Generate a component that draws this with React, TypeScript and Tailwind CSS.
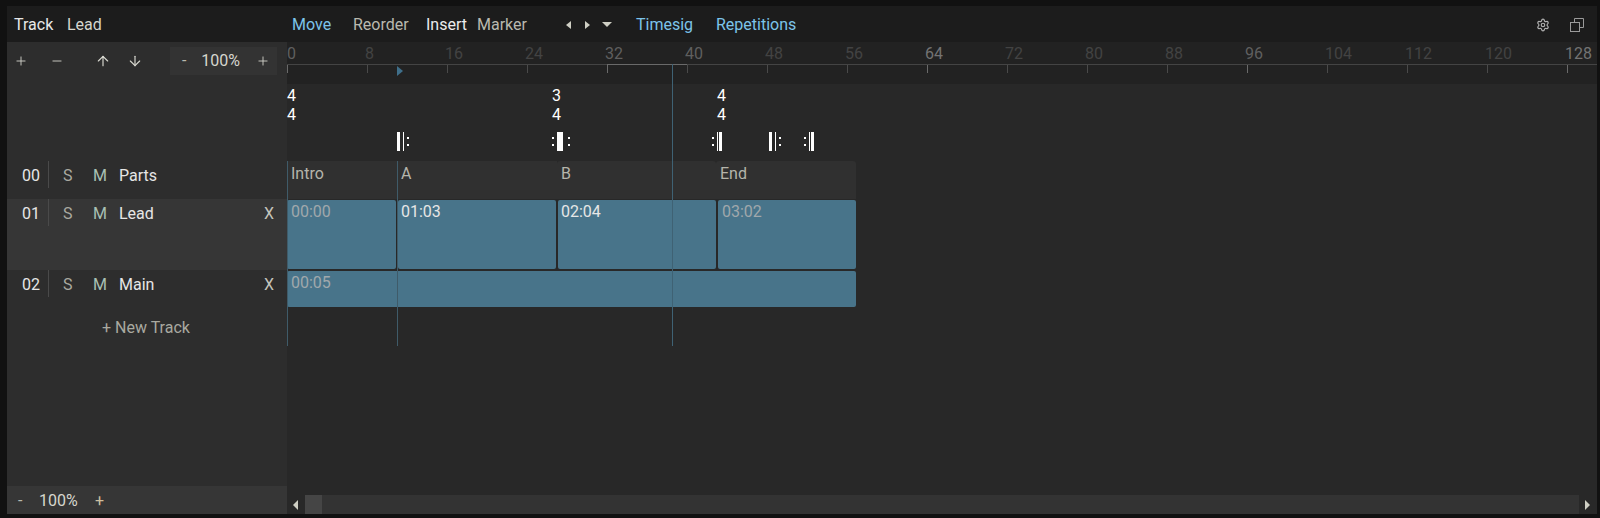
import React from 'react';
import { ArrowDown, ArrowUp, Minus, Plus, Settings } from 'lucide-react';

const ticks = [
  { label: '0', text: 'text-[#5f5f5f]', tick: 'bg-[#6a6a6a]' },
  { label: '8', text: 'text-[#434343]', tick: 'bg-[#4a4a4a]' },
  { label: '16', text: 'text-[#434343]', tick: 'bg-[#4a4a4a]' },
  { label: '24', text: 'text-[#434343]', tick: 'bg-[#4a4a4a]' },
  { label: '32', text: 'text-[#5f5f5f]', tick: 'bg-[#6a6a6a]' },
  { label: '40', text: 'text-[#5f5f5f]', tick: 'bg-[#4a4a4a]' },
  { label: '48', text: 'text-[#434343]', tick: 'bg-[#4a4a4a]' },
  { label: '56', text: 'text-[#434343]', tick: 'bg-[#4a4a4a]' },
  { label: '64', text: 'text-[#737373]', tick: 'bg-[#6a6a6a]' },
  { label: '72', text: 'text-[#434343]', tick: 'bg-[#4a4a4a]' },
  { label: '80', text: 'text-[#434343]', tick: 'bg-[#4a4a4a]' },
  { label: '88', text: 'text-[#434343]', tick: 'bg-[#4a4a4a]' },
  { label: '96', text: 'text-[#5f5f5f]', tick: 'bg-[#6a6a6a]' },
  { label: '104', text: 'text-[#434343]', tick: 'bg-[#4a4a4a]' },
  { label: '112', text: 'text-[#434343]', tick: 'bg-[#4a4a4a]' },
  { label: '120', text: 'text-[#434343]', tick: 'bg-[#4a4a4a]' },
  { label: '128', text: 'text-[#737373]', tick: 'bg-[#6a6a6a]' },
];

const Dots = () => (
  <div className="flex flex-col gap-[5px] w-[2px]">
    <div className="w-[2px] h-[2px] bg-white" />
    <div className="w-[2px] h-[2px] bg-white" />
  </div>
);

const TrackRow = ({ num, name, removable, active, tall }: { num: string; name: string; removable?: boolean; active?: boolean; tall?: boolean }) => (
  <div className={`flex items-start shrink-0 ${tall ? 'h-[71px]' : 'h-[38px]'} ${active ? 'bg-[#363636]' : ''}`}>
    <div className="w-[41px] h-[27px] flex items-center justify-end text-[#e6e6e6] border-r border-[#4a4a4a] box-content">
      <span className="mr-[8px] pt-[2px]">{num}</span>
    </div>
    <span className="ml-[14px] w-[30px] h-[27px] pt-[2px] flex items-center text-[#a9a9a0]">S</span>
    <span className="w-[26px] h-[27px] pt-[2px] flex items-center text-[#a8c0b4]">M</span>
    <span className="h-[27px] pt-[2px] flex items-center text-[#e6e6e6]">{name}</span>
    {removable && <span className="ml-auto mr-[13px] h-[27px] pt-[2px] flex items-center text-[#c4c4bc]">X</span>}
  </div>
);

const Clip = ({ time, bright, className }: { time: string; bright?: boolean; className: string }) => (
  <div className={`bg-[#48748a] rounded-[2px] leading-[24px] ${bright ? 'pl-[3px] text-[#e6e6e6]' : 'pl-[4px] text-[#a0a8ac]'} ${className}`}>{time}</div>
);

const Part = ({ name, className }: { name: string; className: string }) => (
  <div className={`bg-[#303030] h-full pl-[4px] leading-[26px] text-[#b5b5ab] ${className}`}>{name}</div>
);

export default function App() {
  return (
    <div className="w-[1600px] h-[518px] overflow-hidden bg-[#111111] pt-[6px] pl-[7px] pr-[3px] pb-[4px] flex flex-col text-[16px] font-['Roboto','Open_Sans',sans-serif]">
      {/* header */}
      <div className="h-[36px] shrink-0 bg-[#1c1c1c] flex items-center text-[#d6d6ce] pt-px">
        <span className="ml-[7px] w-[53px] text-[#e8e8e8]">Track</span>
        <span className="w-[225px]">Lead</span>
        <span className="w-[61px] text-[#7cc4ea]">Move</span>
        <span className="w-[73px] text-[#b9b9af]">Reorder</span>
        <span className="w-[51px] text-[#ececec]">Insert</span>
        <span className="w-[89px] text-[#b9b9af]">Marker</span>
        <svg width="50" height="10" viewBox="0 0 50 10" className="text-[#cfcfc4] fill-current mr-[20px]">
          <polygon points="5,1 0,5 5,9" />
          <polygon points="19,1 24,5 19,9" />
          <polygon points="36,2 46,2 41,7" />
        </svg>
        <span className="w-[80px] text-[#7cc4ea]">Timesig</span>
        <span className="text-[#7cc4ea]">Repetitions</span>
        <Settings size={14} className="ml-auto mr-[20px] text-[#b0b0b0]" />
        <svg width="14" height="14" viewBox="0 0 14 14" fill="none" stroke="#9a9a9a" className="mr-[13px]">
          <rect x="0.5" y="4.5" width="9" height="9" />
          <path d="M4.5 4.5V0.5H13.5V9.5H9.5" />
        </svg>
      </div>

      <div className="flex flex-1 min-h-0">
        {/* left panel */}
        <div className="w-[280px] shrink-0 bg-[#2d2d2d] flex flex-col text-[#d6d6ce]">
          <div className="h-[119px] shrink-0 pt-[5px] flex items-start">
            <div className="h-[28px] flex items-center text-[#d8d8d0]">
              <Plus size={14} strokeWidth={1.5} className="ml-[7px]" />
              <Minus size={14} strokeWidth={1.5} className="ml-[22px]" />
              <ArrowUp size={16} strokeWidth={1.75} className="ml-[31px]" />
              <ArrowDown size={16} strokeWidth={1.75} className="ml-[16px]" />
            </div>
            <div className="ml-[27px] w-[107px] h-[28px] bg-[#333333] flex items-center justify-between pl-[12px] pr-[7px]">
              <span className="text-[#b9b9af]">-</span>
              <span className="-ml-[1px]">100%</span>
              <Plus size={14} strokeWidth={1.5} />
            </div>
          </div>
          <TrackRow num="00" name="Parts" />
          <TrackRow num="01" name="Lead" removable active tall />
          <TrackRow num="02" name="Main" removable />
          <div className="h-[39px] shrink-0 flex items-center pl-[95px] text-[#a9a9a0]">+ New Track</div>
          <div className="flex-1" />
          <div className="h-[28px] shrink-0 bg-[#363636] flex items-center pl-[11px] pt-px">
            <span className="w-[21px] text-[#b9b9af]">-</span>
            <span className="w-[56px]">100%</span>
            <span className="text-[#cdbf9f]">+</span>
          </div>
        </div>

        {/* timeline */}
        <div className="flex-1 min-w-0 bg-[#282828] flex flex-col relative">
          <div className="h-[42px] shrink-0 bg-[#222222] flex overflow-hidden">
            {ticks.map((t, i) => (
              <div key={t.label} className="w-[80px] shrink-0 flex flex-col">
                <div className={`h-[22px] text-[16px] leading-[24px] overflow-hidden ${t.text} ${i === 0 ? '' : '-ml-[2px]'}`}>{t.label}</div>
                <div className={`h-px ${i === 4 ? 'bg-[#6a6a6a]' : 'bg-[#444444]'}`} />
                <div className={`w-px h-[8px] ${t.tick}`} />
              </div>
            ))}
          </div>

          <div className="h-[77px] shrink-0 flex flex-col text-white">
            <div className="h-[46px] flex pt-[2px] leading-[19px]">
              <div className="w-[265px] flex flex-col"><span>4</span><span>4</span></div>
              <div className="w-[165px] flex flex-col"><span>3</span><span>4</span></div>
              <div className="flex flex-col"><span>4</span><span>4</span></div>
            </div>
            <div className="h-[19px] mt-[2px] flex items-center">
              <div className="ml-[110px] w-[12px] h-full flex items-center">
                <div className="w-[3px] h-full bg-white" />
                <div className="w-px h-full bg-white ml-[3px]" />
                <div className="ml-[3px]"><Dots /></div>
              </div>
              <div className="ml-[143px] w-[18px] h-full flex items-center">
                <Dots />
                <div className="w-[6px] h-full bg-white ml-[3px]" />
                <div className="ml-[5px]"><Dots /></div>
              </div>
              <div className="ml-[142px] w-[10px] h-full flex items-center">
                <Dots />
                <div className="w-px h-full bg-white ml-[3px]" />
                <div className="w-[3px] h-full bg-white ml-px" />
              </div>
              <div className="ml-[47px] w-[12px] h-full flex items-center">
                <div className="w-[3px] h-full bg-white" />
                <div className="w-px h-full bg-white ml-[3px]" />
                <div className="ml-[3px]"><Dots /></div>
              </div>
              <div className="ml-[23px] w-[10px] h-full flex items-center">
                <Dots />
                <div className="w-px h-full bg-white ml-[3px]" />
                <div className="w-[3px] h-full bg-white ml-px" />
              </div>
            </div>
          </div>

          <div className="h-[38px] shrink-0 flex">
            <Part name="Intro" className="w-[110px]" />
            <Part name="A" className="w-[160px]" />
            <Part name="B" className="w-[159px] rounded-t-[3px]" />
            <Part name="End" className="w-[140px] rounded-t-[3px]" />
          </div>
          <div className="h-[71px] shrink-0 flex gap-[2px] py-px">
            <Clip time="00:00" className="w-[109px]" />
            <Clip time="01:03" bright className="w-[158px]" />
            <Clip time="02:04" bright className="w-[158px]" />
            <Clip time="03:02" className="w-[138px]" />
          </div>
          <div className="h-[38px] shrink-0 py-px">
            <Clip time="00:05" className="w-[569px] h-full" />
          </div>

          <div className="flex-1" />
          <div className="h-[19px] shrink-0 flex items-center">
            <svg width="18" height="10" viewBox="0 0 18 10" className="text-[#cfcfc4] fill-current shrink-0">
              <polygon points="11,0 6,5 11,10" />
            </svg>
            <div className="w-[17px] h-full bg-[#454545]" />
            <div className="w-[1257px] h-full bg-[#333333]" />
            <svg width="18" height="10" viewBox="0 0 18 10" className="text-[#cfcfc4] fill-current shrink-0">
              <polygon points="6,0 11,5 6,10" />
            </svg>
          </div>

          {/* markers over the tracks */}
          <div className="absolute left-0 top-[119px] w-px h-[185px] bg-[#3f5b69]" />
          <div className="absolute left-[110px] top-[119px] w-px h-[185px] bg-[#3f5b69]" />
          <div className="absolute left-[385px] top-[22px] w-px h-[282px] bg-[#3f6274]" />
          <svg width="6" height="10" viewBox="0 0 6 10" className="absolute left-[110px] top-[24px] text-[#3f6f8a] fill-current">
            <polygon points="0,0 6,5 0,10" />
          </svg>
        </div>
      </div>
    </div>
  );
}
